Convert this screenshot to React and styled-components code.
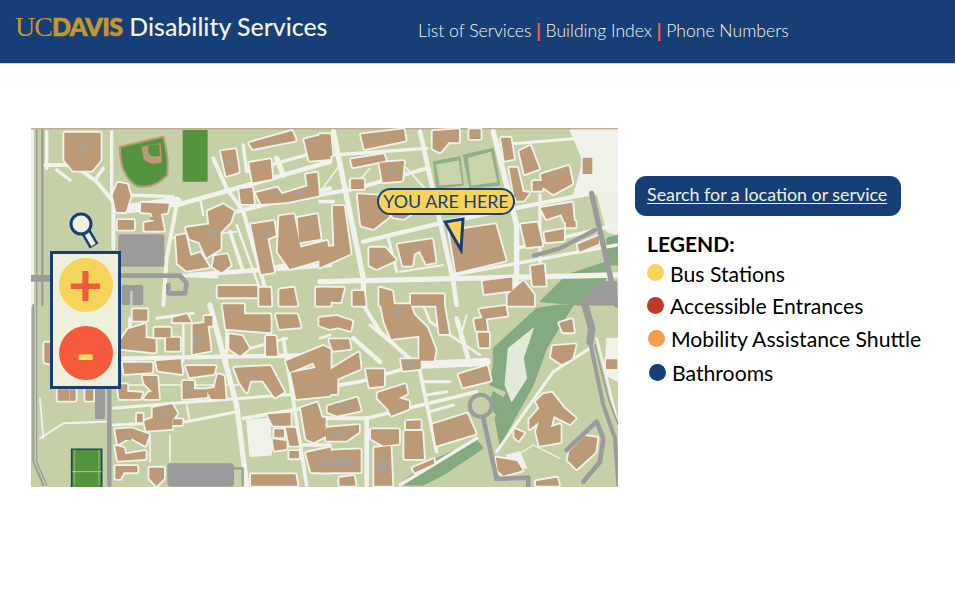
import React from "react";
import styled, { createGlobalStyle } from "styled-components";

const NAVY = "#173e77";
const CREAM = "#eef0dc";
const YELLOW = "#f6d35b";
const RED = "#f55a3c";

const GlobalStyle = createGlobalStyle`
  body {
    margin: 0;
    background: #fff;
    font-family: "Lato", "Liberation Sans", sans-serif;
  }
`;

const Header = styled.header`
  height: 64px;
  background: ${NAVY};
  border-bottom: 1px solid #c5d0e0;
  box-sizing: border-box;
  display: flex;
  align-items: flex-start;
`;

const Brand = styled.div`
  display: flex;
  align-items: baseline;
  margin: 11px 0 0 15px;
  width: 403px;
`;

const LogoUc = styled.span`
  font-family: "Liberation Serif", serif;
  font-size: 28px;
  color: #c4962c;
  letter-spacing: -1px;
`;

const LogoDavis = styled.span`
  font-family: "Lato", sans-serif;
  font-weight: 900;
  font-size: 25px;
  color: #c4962c;
  letter-spacing: -0.6px;
  margin-right: 7px;
  -webkit-text-stroke: 0.7px #c4962c;
`;

const Title = styled.span`
  font-size: 24.9px;
  font-weight: 500;
  color: #f1f1e6;
`;

const Nav = styled.nav`
  display: flex;
  align-items: center;
  gap: 4.5px;
  margin-top: 19px;
  font-size: 17.6px;
  font-weight: 300;
  color: #f4f5ee;
`;

const NavLink = styled.span``;

const Bar = styled.span`
  color: ${RED};
  font-weight: 900;
  font-size: 19px;
`;

const Main = styled.main`
  display: flex;
  align-items: flex-start;
  gap: 17px;
  padding: 64px 0 0 31px;
`;

const MapFrame = styled.div`
  position: relative;
  width: 587px;
  height: 359px;
  flex: none;
  overflow: hidden;
  background: #c6d0a8;
`;

const MapSvg = styled.svg`
  display: block;
  width: 587px;
  height: 359px;
`;

const Building = styled.polygon`
  fill: #bc9a78;
  stroke: #bc9a78;
  stroke-width: 4;
  stroke-linejoin: round;
`;

const Halo = styled.polygon`
  fill: #f1f2ec;
  stroke: #f1f2ec;
  stroke-width: 15;
  stroke-linejoin: round;
`;

const Roof = styled.rect`
  fill: #ae9f8c;
`;

const Road = styled.polyline`
  fill: none;
  stroke: ${p => p.$color || "#f1f2ec"};
  stroke-width: ${p => p.$w || 10};
  stroke-linejoin: round;
  stroke-linecap: round;
`;

const Patch = styled.polygon`
  fill: ${p => p.$color};
  stroke: ${p => p.$color};
  stroke-width: 3;
  stroke-linejoin: round;
`;

const ZoomBox = styled.div`
  position: absolute;
  left: 19px;
  top: 123px;
  width: 71px;
  height: 138px;
  box-sizing: border-box;
  border: 3px solid ${NAVY};
  background: ${CREAM};
  display: flex;
  flex-direction: column;
  align-items: center;
  justify-content: space-between;
  padding: 4px 0 6px;
`;

const ZoomButton = styled.div`
  width: 54px;
  height: 54px;
  box-sizing: border-box;
  padding-bottom: ${p => p.$lift}px;
  border-radius: 50%;
  background: ${p => p.$bg};
  color: ${p => p.$fg};
  display: flex;
  align-items: center;
  justify-content: center;
  font-size: ${p => p.$size}px;
  font-weight: 700;
  line-height: 1;
`;

const Magnifier = styled.svg`
  position: absolute;
  left: 36px;
  top: 84px;
  width: 34px;
  height: 40px;
`;

const HereLabel = styled.div`
  position: absolute;
  left: 346px;
  top: 60px;
  width: 138px;
  height: 27px;
  box-sizing: border-box;
  border: 2.5px solid ${NAVY};
  border-radius: 14px;
  background: ${YELLOW};
  color: ${NAVY};
  font-size: 17.85px;
  line-height: 23px;
  text-align: center;
  white-space: nowrap;
`;

const HerePointer = styled.svg`
  position: absolute;
  left: 411px;
  top: 88px;
  width: 24px;
  height: 38px;
`;

const Side = styled.aside`
  padding-top: 48px;
`;

const SearchButton = styled.a`
  display: block;
  width: 266px;
  height: 40px;
  box-sizing: border-box;
  padding-left: 12px;
  background: ${NAVY};
  border-radius: 11px;
  color: ${CREAM};
  font-size: 17.85px;
  line-height: 37px;
  text-decoration: underline;
  text-underline-offset: 2px;
  white-space: nowrap;
`;

const LegendTitle = styled.div`
  margin: 15px 0 0 12px;
  font-size: 21px;
  font-weight: 700;
  line-height: 26px;
  color: #000;
`;

const LegendRow = styled.div`
  display: flex;
  align-items: center;
  gap: ${p => p.$gap}px;
  height: ${p => p.$height}px;
  margin-left: ${p => 12 + p.$indent}px;
  font-size: 21.2px;
  color: #000;
  white-space: nowrap;
`;

const Dot = styled.span`
  flex: none;
  width: 17px;
  height: 17px;
  border-radius: 50%;
  margin-top: -2px;
  background: ${p => p.$color};
`;

const QUADRANTS = [
  {
    x: 30,
    y: 125,
    roads: [
      ["40,120 130,120 200,170 250,230 250,370", 12],
      ["50,20 50,130", 10],
      ["245,20 245,230", 10],
      ["440,240 620,190 900,110", 14],
      ["440,240 410,400 400,540", 12],
      ["550,100 590,190 640,260 720,540", 12],
      ["620,260 900,190", 13],
      ["300,250 440,230", 30],
      ["290,210 430,215", 10],
      ["600,320 640,440 900,400", 11],
      ["480,450 900,420", 14],
      ["420,450 560,455", 11],
      ["510,220 520,270", 7],
      ["640,60 650,140 900,70", 10],
      ["740,100 760,150", 16],
      ["620,300 700,520", 7],
      ["420,340 620,320", 5],
      ["80,135 120,165", 10],
      ["220,130 195,165", 10]
    ],
    buildings: [
      "105,25 210,25 210,105 185,135 130,135 105,105",
      "265,175 290,180 300,215 285,260 260,258 250,210",
      "265,287 310,287 310,312 265,312",
      "335,235 415,238 410,262 390,265 400,315 345,315 345,295 375,290 365,262 335,260",
      "575,80 615,75 625,140 590,150",
      "660,55 785,20 795,45 670,70",
      "660,115 720,105 725,160 670,170",
      "825,45 885,30 900,100 840,105",
      "440,335 465,330 480,395 510,385 535,425 470,435 445,415",
      "470,310 540,300 535,260 580,240 610,260 600,290 570,320 570,370 530,395 510,350 480,340",
      "555,395 590,390 600,420 575,440 550,425",
      "630,195 665,190 670,235 635,235",
      "680,205 740,190 755,210 835,185 830,150 860,145 865,210 770,230 695,235",
      "665,300 730,290 735,330 710,340 730,440 695,445",
      "750,275 790,270 810,370 890,350 900,395 780,430 745,380",
      "805,280 860,270 870,340 810,350",
      "565,485 680,485 680,515 565,515",
      "690,490 720,490 722,540 690,540",
      "750,495 790,490 800,540 750,540",
      "860,490 900,490 900,540 860,540"
    ],
    roofs: [[135, 60, 35, 25], [585, 105, 30, 15], [535, 315, 25, 20], [690, 315, 30, 15], [825, 300, 25, 15], [790, 195, 30, 15], [360, 275, 30, 10]]
  },
  {
    x: 320,
    y: 125,
    roads: [
      ["40,20 130,460 130,540", 16],
      ["300,20 400,470 410,540", 14],
      ["520,20 590,300 590,540", 16],
      ["0,210 110,190 320,130", 12],
      ["0,100 40,90 320,70", 10],
      ["130,350 380,290 890,190", 13],
      ["0,470 890,450", 16],
      ["400,450 890,360", 10],
      ["590,370 890,300", 11],
      ["0,230 40,230", 11],
      ["540,60 890,30", 9],
      ["660,210 660,440", 10],
      ["205,340 230,440", 9],
      ["60,120 0,200", 5],
      ["90,200 150,130", 5],
      ["260,130 350,230", 6],
      ["240,440 370,420", 6]
    ],
    buildings: [
      "0,30 30,30 35,90 0,95",
      "125,30 250,15 255,45 135,70",
      "340,20 415,15 415,50 385,50 360,80 340,70",
      "450,15 480,15 480,40 450,40",
      "545,40 570,40 580,100 555,105",
      "600,80 630,65 655,130 615,145",
      "95,105 190,90 195,105 100,125",
      "180,115 250,110 245,165 190,170",
      "95,165 130,165 130,190 95,190",
      "665,150 745,125 755,175 700,205 670,185",
      "570,130 590,130 610,215 585,215",
      "640,170 670,170 665,195 640,195",
      "115,210 205,215 205,275 160,310 125,300",
      "215,250 280,260 250,280 220,275",
      "40,245 70,245 90,385 0,425 0,370 45,365",
      "150,370 195,370 225,405 170,430 150,420",
      "235,360 335,345 345,410 320,415 300,375 280,385 275,420 250,420",
      "390,320 525,300 555,405 410,440",
      "590,200 625,205 610,225 590,225",
      "665,250 755,235 760,290 735,290 725,265 680,280",
      "740,290 765,290 765,305 740,305",
      "605,300 650,295 665,360 620,365",
      "675,325 730,315 730,345 680,350",
      "775,360 835,335 835,355 780,378",
      "635,425 670,420 675,480 640,480",
      "490,470 575,460 575,495 495,505",
      "565,510 610,470 640,510 640,540 565,540",
      "275,510 370,510 370,540 275,540",
      "0,490 70,490 60,530 0,525",
      "100,500 130,500 135,540 100,540",
      "180,490 215,500 220,540 180,540",
      "790,100 815,100 815,145 790,145"
    ],
    roofs: [[200, 130, 25, 15], [370, 30, 30, 8], [170, 390, 25, 15], [680, 145, 30, 10], [425, 350, 20, 10], [270, 365, 35, 12], [705, 240, 25, 12]]
  },
  {
    x: 30,
    y: 305,
    roads: [
      ["540,0 620,300 650,540", 16],
      ["280,160 900,150", 13],
      ["250,310 430,295 900,260", 9],
      ["250,360 470,350 620,320", 9],
      ["30,400 100,355 230,350", 6],
      ["30,280 40,400", 5],
      ["360,390 360,470", 5],
      ["420,390 420,470", 5],
      ["640,340 820,310", 11],
      ["760,100 830,540", 11],
      ["590,170 590,40", 9],
      ["460,170 460,60", 7],
      ["240,240 640,240", 5],
      ["820,420 900,420", 11],
      ["300,40 300,130", 11],
      ["660,130 770,100", 9],
      ["380,40 490,25", 9],
      ["470,300 480,350", 6]
    ],
    buildings: [
      "310,15 350,15 350,45 310,45",
      "295,75 345,60 345,100 375,105 370,140 275,130 275,105",
      "360,115 375,115 375,140 360,140",
      "375,70 420,70 420,95 375,95",
      "410,100 448,100 448,135 410,135",
      "430,40 470,30 480,50 430,50",
      "525,35 545,35 545,60 525,60",
      "490,60 530,55 540,135 490,145",
      "580,0 640,0 640,30 720,30 720,80 590,70",
      "600,90 635,95 655,130 630,150 600,130",
      "710,95 735,95 740,150 710,150",
      "740,30 800,30 810,65 750,70",
      "770,170 880,125 900,135 900,270 800,280 785,205 860,190 850,170 780,200",
      "45,115 70,115 80,180 45,170",
      "280,175 365,175 365,200 285,205",
      "380,170 450,165 455,205 385,195",
      "470,185 555,185 550,205 480,215",
      "615,190 720,185 760,260 735,275 700,225 660,225 650,260 630,230",
      "565,210 580,215 585,280 545,280 530,255 555,250",
      "460,230 490,230 490,255 530,255 530,275 460,280",
      "340,215 380,215 385,280 345,280 355,265 370,260 345,235",
      "265,240 290,240 290,262 335,265 330,280 270,280",
      "370,310 425,300 440,325 425,345 425,370 350,375 345,350 370,340",
      "323,328 336,328 336,350 323,350",
      "430,345 455,345 455,358 430,358",
      "258,375 305,372 355,390 345,420 300,395 265,415",
      "258,425 280,430 285,450 345,440 345,460 265,465",
      "258,485 320,485 320,500 280,500 270,520 258,520",
      "360,490 400,490 400,520 380,540 360,520",
      "715,330 780,325 780,360 730,360",
      "735,375 760,375 760,395 735,395",
      "770,370 795,370 805,420 780,420",
      "730,405 768,410 768,430 735,435",
      "780,440 805,440 805,458 780,458",
      "815,310 860,295 890,390 850,410 830,400",
      "865,340 885,340 885,370 865,370",
      "830,445 900,430 900,500 845,500",
      "665,510 795,510 800,540 665,540",
      "85,255 115,255 115,285 85,285",
      "120,255 135,255 135,285 120,285",
      "168,255 188,255 188,285 168,285"
    ],
    roofs: [[490, 90, 25, 30], [650, 205, 30, 20], [350, 220, 25, 12], [385, 320, 30, 15], [870, 175, 30, 15], [465, 240, 22, 25], [280, 385, 25, 20]]
  },
  {
    x: 320,
    y: 305,
    roads: [
      ["130,0 180,80 290,180", 12],
      ["140,340 140,540", 14],
      ["0,250 120,230 290,180", 11],
      ["140,340 470,260", 11],
      ["0,340 140,340", 12],
      ["300,200 350,440", 11],
      ["410,40 450,180", 14],
      ["300,180 500,170", 24],
      ["310,230 390,230", 9],
      ["320,270 380,260", 9],
      ["330,320 400,300", 9],
      ["530,440 700,200 810,130", 9],
      ["240,540 470,400", 10],
      ["0,100 30,90", 8],
      ["310,0 330,50 480,150", 8],
      ["560,470 640,420 720,460", 4],
      ["830,100 900,380", 7],
      ["100,100 180,170", 14],
      ["150,60 210,110", 10],
      ["440,30 420,100", 6]
    ],
    buildings: [
      "185,0 270,0 280,30 320,70 345,135 340,165 300,165 300,90 215,100 195,50",
      "350,0 370,0 385,85 360,85",
      "0,40 50,35 95,50 90,75 55,65 30,70 0,60",
      "480,15 555,5 560,30 490,40",
      "465,45 495,40 500,75 470,75",
      "475,85 505,85 505,125 480,125",
      "30,105 85,105 90,130 40,135",
      "0,130 25,200 115,145 120,190 50,220 50,265 0,265",
      "245,165 300,165 300,190 250,195",
      "140,195 190,195 190,240 150,245",
      "175,265 255,240 260,265 230,280 265,290 265,310 215,330 205,310 175,280",
      "418,210 500,185 510,225 430,245",
      "25,305 110,280 120,315 50,330 25,320",
      "260,350 300,348 300,370 260,370",
      "340,360 440,328 465,385 350,420",
      "20,370 115,362 115,380 80,405 20,405",
      "155,375 235,375 235,415 190,420 155,400",
      "255,380 305,380 310,460 255,460",
      "165,430 210,425 215,540 165,540",
      "0,440 120,435 120,500 0,500",
      "60,520 100,515 105,540 60,540",
      "280,490 340,465 340,475 285,500",
      "700,125 765,120 755,160 725,175 695,155",
      "720,55 755,45 760,80 730,80",
      "670,270 695,265 730,310 765,340 750,355 700,330 690,370 720,360 720,410 660,420 650,380 660,345 630,370 630,345 660,310 650,290",
      "795,395 830,400 825,440 770,490 745,465 750,440",
      "860,165 890,165 890,190 860,190",
      "530,460 590,470 605,495 550,510 535,495",
      "585,375 610,385 595,405 585,395",
      "650,530 710,520 715,540 650,540"
    ],
    roofs: [[205, 12, 45, 12], [445, 210, 45, 12], [255, 170, 35, 15], [5, 455, 100, 30], [45, 295, 55, 15], [30, 380, 45, 15], [170, 460, 35, 40]]
  }
];

const quadTransform = q => `translate(${q.x} ${q.y}) scale(0.3333)`;

const CampusMap = () => (
  <MapSvg viewBox="31 128 587 359">
    <rect x="31" y="128" width="587" height="1.5" fill="#c4ab8f" />
    <g transform={quadTransform(QUADRANTS[0])}>
      <Road points="5,20 5,540" $w={14} />
    </g>
    <g transform={quadTransform(QUADRANTS[1])}>
      <Patch $color="#f0f1e8" points="750,15 895,15 895,200 760,210 790,110" />
      <Patch $color="#eef0e6" points="830,200 895,200 895,330 860,320" />
      <Patch $color="#8fb08a" points="340,110 420,95 430,180 350,190" />
      <Patch $color="#8fb08a" points="430,90 520,70 540,180 450,190" />
      <Patch $color="#c9d4ab" points="350,120 415,108 425,175 360,180" />
      <Patch $color="#c9d4ab" points="445,100 512,82 530,170 455,180" />
      <Patch $color="#85a982" points="660,530 740,450 860,410 860,460 780,540" />
      <Patch $color="#85a982" points="860,340 895,330 895,420 865,420" />
    </g>
    <g transform={quadTransform(QUADRANTS[3])}>
      <Patch $color="#85a982" points="520,130 650,10 720,0 760,0 680,130 640,240 540,420 525,340 560,260 510,240 520,180" />
      <Patch $color="#e4ead9" points="565,130 640,70 610,160 620,220 575,290 555,240" />
      <Patch $color="#85a982" points="235,540 330,470 470,405 490,430 370,510 310,540" />
      <Patch $color="#85a982" points="520,260 570,290 530,330 505,300" />
      <Patch $color="#f0f1e8" points="860,100 895,100 895,230 855,210" />
      <Patch $color="#f0f1e8" points="560,450 600,440 620,490 560,480" />
    </g>
    <g transform={quadTransform(QUADRANTS[2])}>
      <Patch $color="#f0f1e8" points="650,345 720,340 725,450 660,455" />
    </g>
    {QUADRANTS.map(q => (
      <g key={q.x + "-" + q.y} transform={quadTransform(q)}>
        {q.roads.map(([points, w]) => (
          <Road key={points} points={points} $w={w} />
        ))}
        {q.buildings.map(points => (
          <Halo key={points} points={points} />
        ))}
      </g>
    ))}
    {QUADRANTS.map(q => (
      <g key={q.x + "-" + q.y} transform={quadTransform(q)}>
        {q.buildings.map(points => (
          <Building key={points} points={points} />
        ))}
        {q.roofs.map(([x, y, width, height]) => (
          <Roof key={x + "-" + y} x={x} y={y} width={width} height={height} rx="4" />
        ))}
      </g>
    ))}
    {/* baseball field, football pitch */}
    <g transform={quadTransform(QUADRANTS[0])}>
      <path d="M270,65 L400,35 Q418,100 412,150 Q370,195 320,183 Q268,150 270,65 Z" fill="#55943f" stroke="#bc9a78" strokeWidth="6" strokeLinejoin="round" />
      <path d="M335,65 L392,55 L396,112 Q360,125 340,100 Z" fill="#bc9a78" />
      <path d="M355,62 L388,58 L390,92 Q365,100 355,85 Z" fill="#55943f" />
      <rect x="458" y="15" width="75" height="155" rx="3" fill="#55943f" />
    </g>
    <g transform={quadTransform(QUADRANTS[2])}>
      <rect x="125" y="433" width="90" height="130" fill="#55943f" stroke="#1e4a5e" strokeWidth="5" />
      <line x1="125" y1="500" x2="215" y2="500" stroke="#cfe0c0" strokeWidth="2" />
      <line x1="133" y1="433" x2="133" y2="540" stroke="#cfe0c0" strokeWidth="1.5" />
      <line x1="207" y1="433" x2="207" y2="540" stroke="#cfe0c0" strokeWidth="1.5" />
    </g>
    {/* grey roads and parking */}
    <g transform={quadTransform(QUADRANTS[0])}>
      <Road $color="#9b9b9b" $w={5} points="20,15 20,540" />
      <Road $color="#9b9b9b" $w={7} points="37,15 37,540" />
      <Road $color="#9b9b9b" $w={20} points="5,460 70,460" />
      <rect x="265" y="328" width="138" height="97" rx="6" fill="#9b9b9b" />
      <Road $color="#9b9b9b" $w={14} points="270,452 450,452 470,475 465,505 415,505 415,480" />
      <rect x="275" y="480" width="65" height="60" rx="6" fill="#9b9b9b" />
      <rect x="300" y="498" width="8" height="42" fill="#c6d0a8" />
    </g>
    <g transform={quadTransform(QUADRANTS[1])}>
      <Road $color="#9b9b9b" $w={16} points="815,205 890,540" />
      <Road $color="#9b9b9b" $w={13} points="642,392 720,370 825,315" />
      <Patch $color="#9b9b9b" points="770,540 850,470 890,470 890,540" />
    </g>
    <g transform={quadTransform(QUADRANTS[2])}>
      <Road $color="#9b9b9b" $w={6} points="10,0 10,470 40,540" />
      <Road $color="#9b9b9b" $w={4} points="20,0 20,470 50,540" />
      <rect x="195" y="240" width="30" height="102" rx="4" fill="#9b9b9b" />
      <Road $color="#9b9b9b" $w={13} points="238,240 238,540" />
      <rect x="412" y="475" width="200" height="70" rx="10" fill="#9b9b9b" />
      <Road $color="#9b9b9b" $w={7} points="610,490 638,490 638,540" />
    </g>
    <g transform={quadTransform(QUADRANTS[3])}>
      <Road $color="#9b9b9b" $w={22} points="795,0 815,70 810,110" />
      <Road $color="#9b9b9b" $w={12} points="810,110 850,300 885,400 895,540" />
      <Road $color="#9b9b9b" $w={5} points="825,120 865,280 895,360" />
      <Road $color="#9b9b9b" $w={14} points="740,435 830,350 850,400 840,470 790,530" />
      <Road $color="#9b9b9b" $w={14} points="490,340 530,522 625,518 625,545" />
      <circle cx="482" cy="302" r="33" fill="#c6d0a8" stroke="#9b9b9b" strokeWidth="12" />
    </g>
  </MapSvg>
);

const legend = [
  { color: YELLOW, label: "Bus Stations", indent: 0, gap: 6, height: 33 },
  { color: "#bd3b28", label: "Accessible Entrances", indent: 0, gap: 6, height: 32 },
  { color: "#f49b4c", label: "Mobility Assistance Shuttle", indent: 1, gap: 6, height: 34 },
  { color: NAVY, label: "Bathrooms", indent: 2, gap: 6, height: 34 }
];

export default function App() {
  return (
    <>
      <GlobalStyle />
      <Header>
        <Brand>
          <LogoUc>UC</LogoUc>
          <LogoDavis>DAVIS</LogoDavis>
          <Title>Disability Services</Title>
        </Brand>
        <Nav>
          <NavLink>List of Services</NavLink>
          <Bar>|</Bar>
          <NavLink>Building Index</NavLink>
          <Bar>|</Bar>
          <NavLink>Phone Numbers</NavLink>
        </Nav>
      </Header>
      <Main>
        <MapFrame>
          <CampusMap />
          <Magnifier viewBox="0 0 34 40">
            <line x1="19" y1="20" x2="27" y2="34" stroke={NAVY} strokeWidth="10" />
            <line x1="19.5" y1="21" x2="26.5" y2="33" stroke={CREAM} strokeWidth="5" />
            <circle cx="14" cy="12" r="10" fill={CREAM} stroke={NAVY} strokeWidth="3" />
          </Magnifier>
          <ZoomBox>
            <ZoomButton $bg={YELLOW} $fg={RED} $size={60} $lift={5}>+</ZoomButton>
            <ZoomButton $bg={RED} $fg="#f0e45c" $size={54} $lift={0}>-</ZoomButton>
          </ZoomBox>
          <HereLabel>YOU ARE HERE</HereLabel>
          <HerePointer viewBox="0 0 24 38">
            <polygon points="3,6 21,3 19,34" fill={YELLOW} stroke={NAVY} strokeWidth="3" strokeLinejoin="miter" />
          </HerePointer>
        </MapFrame>
        <Side>
          <SearchButton>Search for a location or service</SearchButton>
          <LegendTitle>LEGEND:</LegendTitle>
          {legend.map(item => (
            <LegendRow key={item.label} $indent={item.indent} $gap={item.gap} $height={item.height}>
              <Dot $color={item.color} />
              {item.label}
            </LegendRow>
          ))}
        </Side>
      </Main>
    </>
  );
}
